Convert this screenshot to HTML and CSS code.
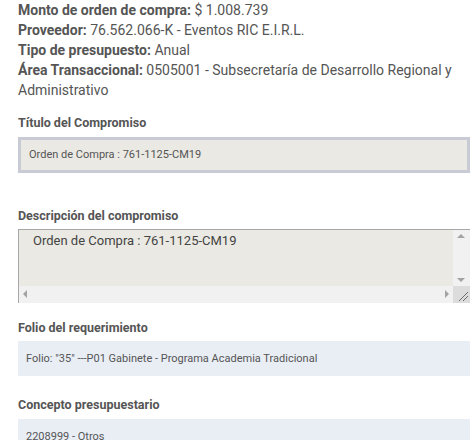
FILE: index.html
```html
<!DOCTYPE html>
<html lang="es">
<head>
  <meta charset="UTF-8">
  <title>Compromiso</title>
  <link rel="stylesheet" href="styles.css">
</head>
<body>
  <div class="detalle">
    <div class="resumen">
      <p><b>Monto de orden de compra:</b> $ 1.008.739</p>
      <p><b>Proveedor:</b> 76.562.066-K - Eventos RIC E.I.R.L.</p>
      <p><b>Tipo de presupuesto:</b> Anual</p>
      <p><b>Área Transaccional:</b> 0505001 - Subsecretaría de Desarrollo Regional y Administrativo</p>
    </div>

    <div class="campo campo-titulo">
      <h4>Título del Compromiso</h4>
      <div class="caja-input">Orden de Compra : 761-1125-CM19</div>
    </div>

    <div class="campo campo-desc">
      <h4>Descripción del compromiso</h4>
      <div class="area">
        <div class="area-texto">Orden de Compra : 761-1125-CM19</div>
        <div class="scroll-v">
          <span class="flecha arriba"></span>
          <span class="flecha abajo"></span>
        </div>
        <div class="scroll-h">
          <span class="flecha izq"></span>
          <span class="flecha der"></span>
        </div>
        <div class="esquina">
          <svg width="17" height="17" viewBox="0 0 17 17"><path d="M6 15 L15 6 M10 15 L15 10" stroke="#6b6b6b" stroke-width="1"/></svg>
        </div>
      </div>
    </div>

    <div class="campo campo-folio">
      <h4>Folio del requerimiento</h4>
      <div class="caja-info">Folio: "35" ---P01 Gabinete - Programa Academia Tradicional</div>
    </div>

    <div class="campo campo-concepto">
      <h4>Concepto presupuestario</h4>
      <div class="caja-info">2208999 - Otros</div>
    </div>
  </div>
</body>
</html>
```

FILE: styles.css
```css
body {
  margin: 0;
  font-family: Roboto, "Liberation Sans", sans-serif;
  color: #555;
  background: #fff;
}

.detalle {
  padding: 0 5px 0 18px;
}

.resumen p {
  margin: 0;
  font-size: 14px;
  line-height: 20px;
}

.resumen b {
  font-weight: bold;
}

.campo h4 {
  margin: 0;
  font-size: 12.5px;
  font-weight: bold;
  line-height: 16px;
  color: #555;
}

.campo-titulo {
  margin-top: 15px;
}

.campo-titulo h4 {
  margin-bottom: 6px;
}

.caja-input {
  background: #eae9e3;
  border: 3px solid #c8cbd3;
  height: 30px;
  line-height: 30px;
  padding: 0 8px;
  font-size: 11px;
  color: #555;
}

.campo-desc {
  margin-top: 35px;
}

.campo-desc h4 {
  margin-bottom: 5px;
}

.area {
  display: grid;
  grid-template-columns: 1fr 17px;
  grid-template-rows: 56px 17px;
  border-top: 1px solid #a7a7a7;
  border-left: 1px solid #a7a7a7;
}

.area-texto {
  background: #eae9e3;
  padding: 3px 14px;
  font-size: 13px;
  line-height: 16px;
  color: #444;
}

.scroll-v,
.scroll-h {
  background: #f1f1f1;
  position: relative;
}

.esquina {
  background: #dcdcdc;
}

.esquina svg {
  display: block;
}

.flecha {
  position: absolute;
  width: 0;
  height: 0;
  border: 4px solid transparent;
}

.arriba {
  top: 4px;
  left: 4px;
  border-bottom: 4px solid #a3a3a3;
  border-top: 0;
}

.abajo {
  bottom: 4px;
  left: 4px;
  border-top: 4px solid #a3a3a3;
  border-bottom: 0;
}

.izq {
  left: 4px;
  top: 4px;
  border-right: 4px solid #a3a3a3;
  border-left: 0;
}

.der {
  right: 4px;
  top: 4px;
  border-left: 4px solid #a3a3a3;
  border-right: 0;
}

.campo-folio {
  margin-top: 17px;
}

.campo-folio h4 {
  margin-bottom: 5px;
}

.campo-concepto h4 {
  margin-bottom: 6px;
}

.caja-info {
  background: #e9eef5;
  height: 35px;
  line-height: 35px;
  padding: 0 8px;
  font-size: 11px;
  color: #555;
}

.campo-concepto {
  margin-top: 21px;
}
```
